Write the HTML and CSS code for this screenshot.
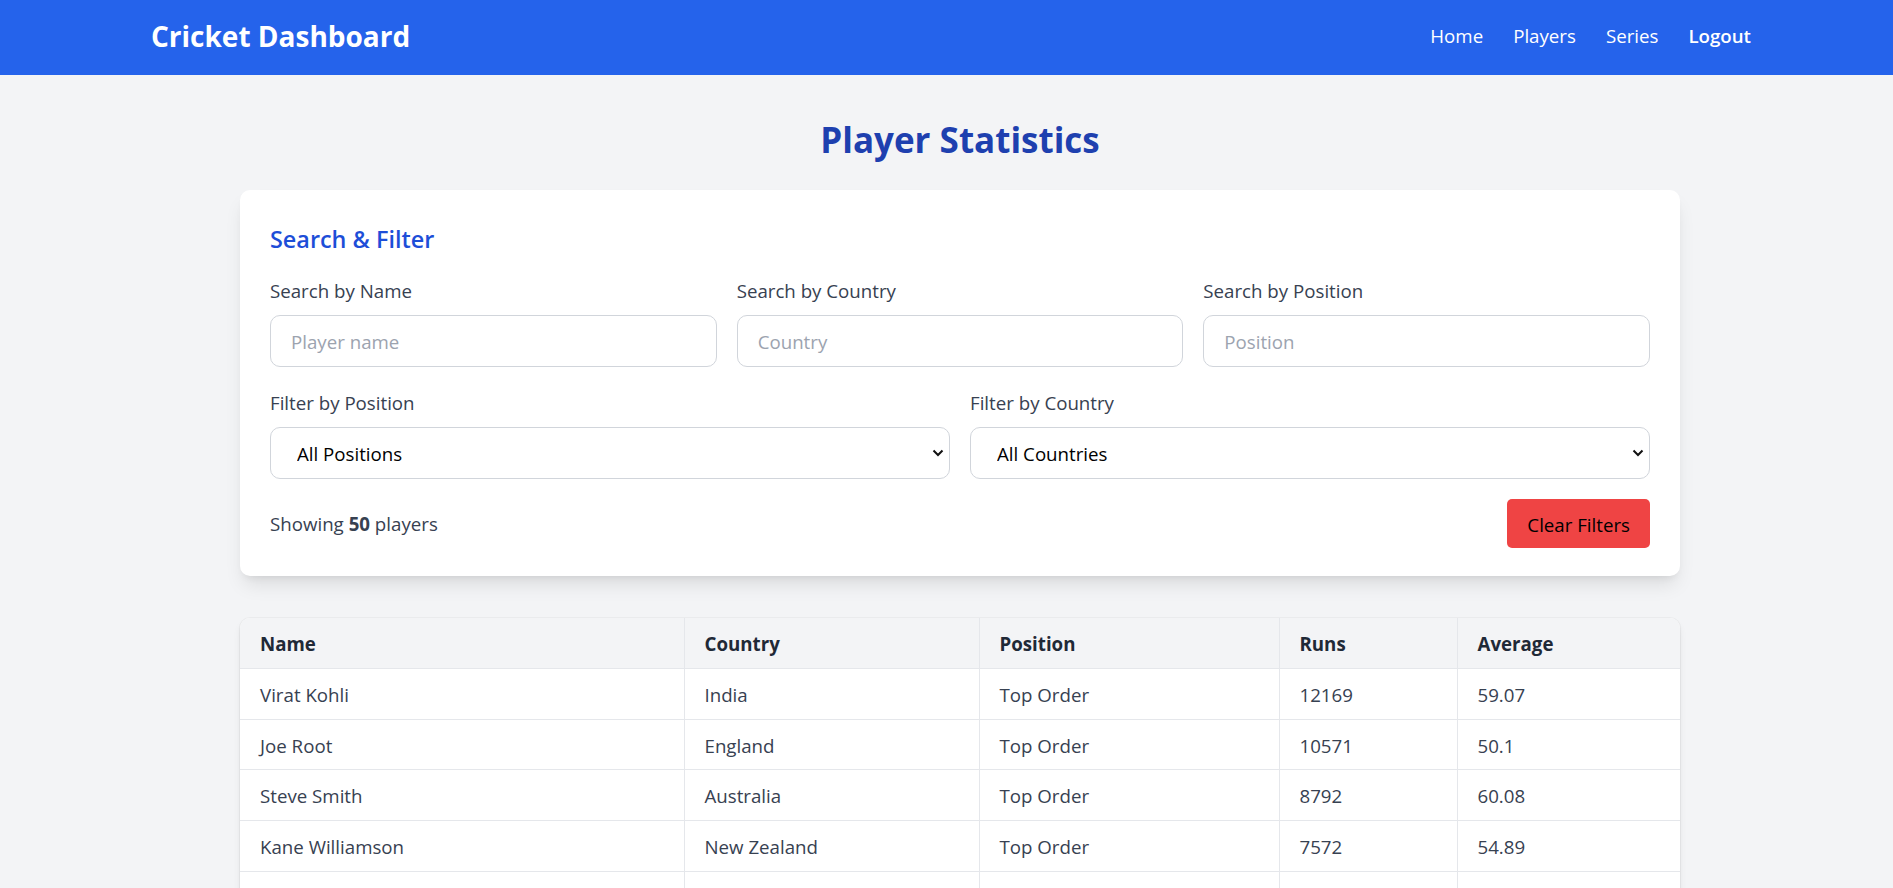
FILE: index.html
```html
<!DOCTYPE html>
<html lang="en">
<head>
<meta charset="utf-8">
<title>Cricket Dashboard</title>
<link rel="stylesheet" href="styles.css">
</head>
<body>
<nav class="nav">
  <div class="brand">Cricket Dashboard</div>
  <div class="links">
    <a href="#">Home</a>
    <a href="#">Players</a>
    <a href="#">Series</a>
    <a href="#" class="logout">Logout</a>
  </div>
</nav>
<main class="main">
  <h1 class="page-title">Player Statistics</h1>
  <section class="card">
    <h2 class="card-title">Search &amp; Filter</h2>
    <div class="grid3">
      <div class="field">
        <label>Search by Name</label>
        <input type="text" placeholder="Player name">
      </div>
      <div class="field">
        <label>Search by Country</label>
        <input type="text" placeholder="Country">
      </div>
      <div class="field">
        <label>Search by Position</label>
        <input type="text" placeholder="Position">
      </div>
    </div>
    <div class="grid2">
      <div class="field">
        <label>Filter by Position</label>
        <div class="select-wrap">
          <select><option>All Positions</option></select>
          <svg class="chev" width="12" height="8" viewBox="0 0 12 8"><path d="M1.5 1.5 L6 6 L10.5 1.5" fill="none" stroke="#111" stroke-width="2"/></svg>
        </div>
      </div>
      <div class="field">
        <label>Filter by Country</label>
        <div class="select-wrap">
          <select><option>All Countries</option></select>
          <svg class="chev" width="12" height="8" viewBox="0 0 12 8"><path d="M1.5 1.5 L6 6 L10.5 1.5" fill="none" stroke="#111" stroke-width="2"/></svg>
        </div>
      </div>
    </div>
    <div class="footer-row">
      <span class="count">Showing <b>50</b> players</span>
      <button class="clear">Clear Filters</button>
    </div>
  </section>
  <section class="table-wrap">
    <table class="stats">
      <colgroup>
        <col class="c-name"><col class="c-country"><col class="c-pos"><col class="c-runs"><col class="c-avg">
      </colgroup>
      <thead>
        <tr><th>Name</th><th>Country</th><th>Position</th><th>Runs</th><th>Average</th></tr>
      </thead>
      <tbody>
        <tr><td>Virat Kohli</td><td>India</td><td>Top Order</td><td>12169</td><td>59.07</td></tr>
        <tr><td>Joe Root</td><td>England</td><td>Top Order</td><td>10571</td><td>50.1</td></tr>
        <tr><td>Steve Smith</td><td>Australia</td><td>Top Order</td><td>8792</td><td>60.08</td></tr>
        <tr><td>Kane Williamson</td><td>New Zealand</td><td>Top Order</td><td>7572</td><td>54.89</td></tr>
        <tr><td>Babar Azam</td><td>Pakistan</td><td>Top Order</td><td>5729</td><td>56.17</td></tr>
        <tr><td>Rohit Sharma</td><td>India</td><td>Top Order</td><td>10709</td><td>49.12</td></tr>
      </tbody>
    </table>
  </section>
</main>
</body>
</html>
```

FILE: styles.css
```css
* { box-sizing: border-box; }

body {
  margin: 0;
  background: #f3f4f6;
  font-family: "Open Sans", "Noto Sans", sans-serif;
  font-size: 18.7px;
  color: #374151;
}

.nav {
  height: 75px;
  background: #2563eb;
  display: flex;
  align-items: center;
  justify-content: space-between;
  padding: 0 142px 3px 151px;
}

.brand {
  color: #fff;
  font-weight: 700;
  font-size: 28px;
  line-height: 40px;
}

.links {
  display: flex;
  gap: 30px;
}

.links a {
  color: #fff;
  text-decoration: none;
  font-size: 18.7px;
  line-height: 30px;
}

.links .logout { font-weight: 600; }

.main {
  padding: 42px 0 40px 27px;
}

.page-title {
  margin: 0 0 28px;
  text-align: center;
  font-size: 35px;
  line-height: 45px;
  font-weight: 700;
  color: #1e40af;
}

.card {
  width: 1440px;
  margin: 0 auto;
  background: #fff;
  border-radius: 10px;
  padding: 31px 30px 28px;
  box-shadow: 0 12px 19px -4px rgba(0,0,0,0.1), 0 5px 8px -5px rgba(0,0,0,0.1);
}

.card-title {
  margin: 0 0 19px;
  padding-top: 1px;
  font-size: 23.4px;
  line-height: 35px;
  font-weight: 600;
  color: #1d4ed8;
}

.grid3 {
  display: grid;
  grid-template-columns: repeat(3, 1fr);
  gap: 20px;
  margin-bottom: 21px;
}

.grid2 {
  display: grid;
  grid-template-columns: repeat(2, 1fr);
  gap: 20px;
  margin-bottom: 20px;
}

.field label {
  display: block;
  line-height: 30px;
  margin-bottom: 9px;
  color: #374151;
}

.field input,
.field select {
  display: block;
  width: 100%;
  height: 52px;
  border: 1px solid #d1d5db;
  border-radius: 10px;
  background: #fff;
  font-family: inherit;
  font-size: 18.7px;
  outline: none;
}

.field input {
  padding: 1px 20px 0;
  color: #111827;
}

.field input::placeholder { color: #9ca3af; }

.select-wrap { position: relative; }

.field select {
  appearance: none;
  -webkit-appearance: none;
  padding: 1px 40px 0 26px;
  color: #000;
}

.chev {
  position: absolute;
  right: 6px;
  top: 22px;
  pointer-events: none;
}

.footer-row {
  display: flex;
  align-items: center;
  justify-content: space-between;
}

.count { line-height: 30px; color: #374151; padding-top: 1px; }
.count b { font-weight: 700; }

.clear {
  height: 49px;
  padding: 1px 20px 0;
  border: none;
  border-radius: 5px;
  background: #ef4444;
  color: #000;
  font-family: inherit;
  font-size: 18.7px;
}

.table-wrap {
  width: 1440px;
  margin: 42px auto 0;
  background: #fff;
  border-radius: 10px;
  overflow: hidden;
  box-shadow: 0 5px 8px -1px rgba(0,0,0,0.08), 0 2px 5px -2px rgba(0,0,0,0.08), 0 0 0 1px rgba(0,0,0,0.03);
}

.stats {
  width: 100%;
  border-collapse: collapse;
  table-layout: fixed;
}

.c-name { width: 444px; }
.c-country { width: 295px; }
.c-pos { width: 300px; }
.c-runs { width: 178px; }
.c-avg { width: 223px; }

.stats th,
.stats td {
  text-align: left;
  padding: 11px 20px 9px;
  line-height: 30px;
  border-bottom: 1px solid #e5e7eb;
  border-right: 1px solid #e5e7eb;
}

.stats th:last-child,
.stats td:last-child { border-right: none; }

.stats th {
  background: #f3f4f6;
  font-weight: 700;
  color: #1f2937;
}

.stats td {
  line-height: 29.7px;
  color: #374151;
}
```
